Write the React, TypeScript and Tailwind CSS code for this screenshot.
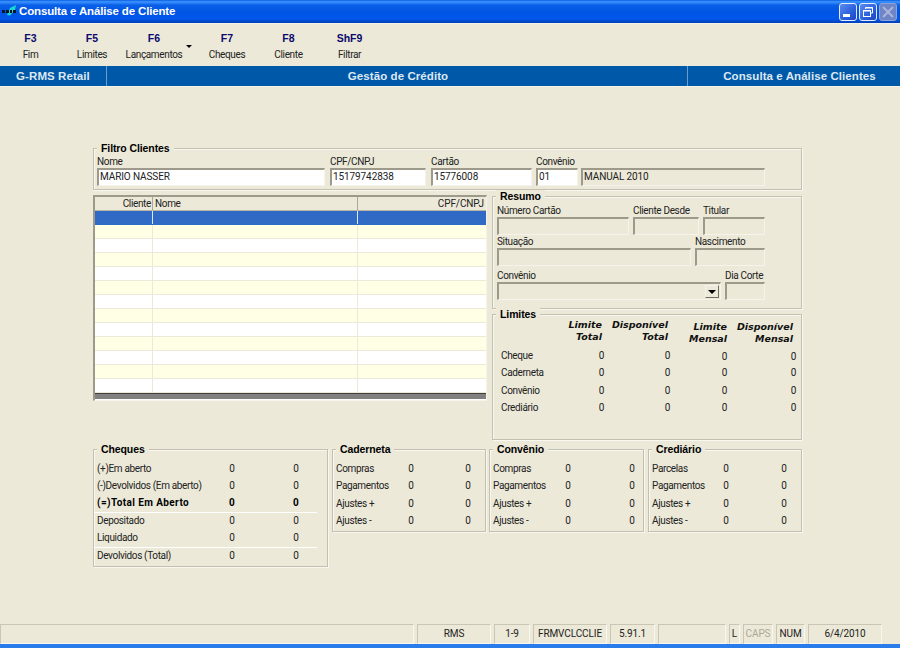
import React from 'react';

const sunken = 'border-t-2 border-l-2 border-r border-b border-t-[#9d9a8c] border-l-[#9d9a8c] border-r-[#f6f4ea] border-b-[#f6f4ea]';

const TOOLS = [
  { key: 'F3', label: 'Fim', width: 'w-[61px]' },
  { key: 'F5', label: 'Limites', width: 'w-[62px]' },
  { key: 'F6', label: 'Lançamentos', width: 'w-[62px]' },
  { key: 'F7', label: 'Cheques', width: 'w-[62px]' },
  { key: 'F8', label: 'Cliente', width: 'w-[61px]' },
  { key: 'ShF9', label: 'Filtrar', width: 'w-[61px]' },
];

function Group({ title, className, children }: { title: string; className: string; children?: React.ReactNode }) {
  return (
    <div className={`relative border border-[#c3c0b2] shadow-[inset_1px_1px_0_#f8f7f0,1px_1px_0_#f8f7f0] ${className}`}>
      <span className="absolute left-[3px] top-[-7px] bg-[#ece9d8] px-1 font-['Liberation_Sans',sans-serif] text-[10.5px] leading-[12px] font-bold tracking-[-0.1px] text-black">{title}</span>
      {children}
    </div>
  );
}

function Field({ label, className, value, white }: { label: string; className: string; value?: string; white?: boolean }) {
  return (
    <div className={className}>
      <div className="h-[12px] text-[10px] leading-[11px] text-[#222] whitespace-nowrap">{label}</div>
      <div className={`h-[18px] pl-px text-[10px] leading-[14px] tracking-[-0.1px] text-[#222] whitespace-nowrap ${sunken} ${white ? 'bg-white' : 'bg-[#ece9d8]'}`}>{value}</div>
    </div>
  );
}

function StatPanel({ title, className, cols, rows }: { title: string; className: string; cols: string; rows: { label: string; a: string; b: string }[] }) {
  return (
    <Group title={title} className={className}>
      <div className="pt-[10px]">
        {rows.map((r) => (
          <div key={r.label} className={`grid h-[17.5px] items-center text-[10px] leading-[12px] text-[#222] ${cols}`}>
            <span className="whitespace-nowrap pl-[3px]">{r.label}</span>
            <span className="text-center">{r.a}</span>
            <span className="col-start-4 text-center">{r.b}</span>
          </div>
        ))}
      </div>
    </Group>
  );
}

const shortRows = (first: string) => [
  { label: first, a: '0', b: '0' },
  { label: 'Pagamentos', a: '0', b: '0' },
  { label: 'Ajustes +', a: '0', b: '0' },
  { label: 'Ajustes -', a: '0', b: '0' },
];

const LIMIT_ROWS = ['Cheque', 'Caderneta', 'Convênio', 'Crediário'];

const STATUS = [
  { text: '', width: 'w-[414px]' },
  { text: 'RMS', width: 'w-[74px]' },
  { text: '1-9', width: 'w-[36px]' },
  { text: 'FRMVCLCCLIE', width: 'w-[74px]' },
  { text: '5.91.1', width: 'w-[45px]' },
  { text: '', width: 'w-[68px]' },
  { text: 'L', width: 'w-[11px]' },
  { text: 'CAPS', width: 'w-[30px]', dim: true },
  { text: 'NUM', width: 'w-[29px]' },
  { text: '6/4/2010', width: 'w-[74px]' },
];

export default function App() {
  return (
    <div className="flex h-[648px] w-[900px] flex-col overflow-hidden bg-[#ece9d8] font-['Roboto',sans-serif] tracking-[-0.35px]">
      {/* Title bar */}
      <div className="flex h-[23px] items-center bg-[linear-gradient(180deg,#0a5ee0_0%,#3d95ff_8%,#0a5fe8_22%,#0054e3_55%,#0058ee_80%,#0040b8_100%)] pl-[2px] pr-[3px] font-['Liberation_Sans',sans-serif]">
        <svg width="15" height="14" viewBox="0 0 15 14" className="mr-[2px] shrink-0">
          <path d="M5 10 L8 3 L14 0 L13 5 L8 10.5 Z" fill="#18d8d0" />
          <path d="M0 5h3v3H0zM4 5h3v3H4zM8 5h2v3H8zM11 5h3v3h-3z" fill="#0a1428" />
        </svg>
        <span className="text-[11.5px] font-bold tracking-[-0.15px] text-white">Consulta e Análise de Cliente</span>
        <div className="ml-auto flex gap-[2px]">
          <div className="flex h-[18px] w-[18px] items-end rounded-[3px] border border-[#e4ecfb] bg-[linear-gradient(135deg,#5d8cf0,#2a5fdc_60%,#1c45c0)] pb-[3px] pl-[3px]">
            <div className="h-[3px] w-[7px] bg-white" />
          </div>
          <div className="flex h-[18px] w-[18px] items-center justify-center rounded-[3px] border border-[#e4ecfb] bg-[linear-gradient(135deg,#5d8cf0,#2a5fdc_60%,#1c45c0)]">
            <svg width="12" height="12" viewBox="0 0 12 12" fill="none" stroke="white">
              <path d="M3.5 3V1.5H10.5V7H8.5" />
              <rect x="1.5" y="4.5" width="7" height="6" />
              <path d="M1.5 5H8.5M3.5 2H10.5" />
            </svg>
          </div>
          <div className="flex h-[18px] w-[18px] items-center justify-center rounded-[3px] border border-[#8ea3d8] bg-[#6f86c6]">
            <svg width="12" height="12" viewBox="0 0 12 12" fill="none" stroke="#a9b6dc" strokeWidth="2">
              <path d="M1 1L11 11M11 1L1 11" />
            </svg>
          </div>
        </div>
      </div>

      {/* Toolbar */}
      <div className="flex h-[43px] items-start border-t border-[#f4f2e8] pt-[7px]">
        {TOOLS.map((t) => (
          <React.Fragment key={t.key}>
            <div className={`${t.width} flex flex-col items-center`}>
              <span className="h-[14px] font-['Liberation_Sans',sans-serif] text-[10.5px] leading-[14px] font-bold tracking-normal text-[#0a0a6e]">{t.key}</span>
              <span className="mt-[4px] h-[12px] whitespace-nowrap text-[10px] leading-[12px] text-[#222]">{t.label}</span>
            </div>
            {t.key === 'F6' && (
              <div className="w-[11px] pt-[14px] pl-[1px]">
                <div className="h-0 w-0 border-x-[3px] border-t-[3px] border-x-transparent border-t-black" />
              </div>
            )}
          </React.Fragment>
        ))}
      </div>

      {/* Section bar */}
      <div className="flex h-[21px] border-b border-[#f6f4ea] bg-[#0058a8] font-['Liberation_Sans',sans-serif] text-[11.5px] leading-[20px] font-bold tracking-[0.08px] text-[#dfe8f2]">
        <div className="w-[107px] border-r border-[#6d9ccb] text-center">G-RMS Retail</div>
        <div className="w-[581px] border-r border-[#6d9ccb] pl-[2px] text-center">Gestão de Crédito</div>
        <div className="flex-1 pl-[11px] text-center">Consulta e Análise Clientes</div>
      </div>

      {/* Form */}
      <div className="flex-1 pl-[93px] pt-[61px]">
        <Group title="Filtro Clientes" className="flex h-[42px] w-[709px] pl-[3px] pt-[7px]">
          <Field label="Nome" className="w-[228px]" value="MARIO NASSER" white />
          <Field label="CPF/CNPJ" className="ml-[5px] w-[96px]" value="15179742838" white />
          <Field label="Cartão" className="ml-[5px] w-[101px]" value="15776008" white />
          <Field label="Convênio" className="ml-[4px] w-[42px]" value="01" white />
          <Field label="" className="ml-[3px] w-[184px]" value="MANUAL 2010" />
        </Group>

        <div className="mt-[5px] flex items-start">
          {/* Clients grid */}
          <div className={`h-[206px] w-[394px] overflow-hidden bg-white ${sunken}`}>
            <div className="grid h-[14px] grid-cols-[58px_205px_1fr] border-b border-[#b8b5a6] bg-[#ece9d8] text-[10px] leading-[13px] text-[#222]">
              <span className="border-r border-[#aca899] pr-px text-right">Cliente</span>
              <span className="border-r border-[#aca899] pl-[2px]">Nome</span>
              <span className="pr-[2px] text-right tracking-[-0.1px]">CPF/CNPJ</span>
            </div>
            {Array.from({ length: 13 }).map((_, i) => (
              <div
                key={i}
                className={`grid h-[14px] grid-cols-[58px_205px_1fr] border-b ${i === 0 ? 'border-[#316ac5] bg-[#316ac5]' : i % 2 === 1 ? 'border-[#ece9d8] bg-[#ffffe6]' : 'border-[#ece9d8] bg-white'}`}
              >
                <span className={`border-r ${i === 0 ? 'border-[#dfe6f5]' : 'border-[#ece9d8]'}`} />
                <span className={`border-r ${i === 0 ? 'border-[#dfe6f5]' : 'border-[#ece9d8]'}`} />
                <span />
              </div>
            ))}
            <div className="h-[6px] border-t border-[#404040] bg-[#808080]" />
          </div>

          <div className="ml-[5px] flex flex-col">
            <Group title="Resumo" className="mt-px h-[113px] w-[310px] pl-[4px] pt-[8px]">
              <div className="flex">
                <Field label="Número Cartão" className="w-[132px]" />
                <Field label="Cliente Desde" className="ml-[4px] w-[66px]" />
                <Field label="Titular" className="ml-[4px] w-[62px]" />
              </div>
              <div className="mt-[1px] flex">
                <Field label="Situação" className="w-[194px]" />
                <Field label="Nascimento" className="ml-[4px] w-[70px]" />
              </div>
              <div className="mt-[4px] flex">
                <div className="w-[224px]">
                  <div className="h-[12px] text-[10px] leading-[11px] text-[#222]">Convênio</div>
                  <div className={`flex h-[18px] justify-end ${sunken}`}>
                    <div className="mr-[1px] mt-[1px] flex h-[13px] w-[14px] items-center justify-center border border-[#f6f4ea] border-r-[#716f64] border-b-[#716f64] bg-[#ece9d8]">
                      <div className="h-0 w-0 border-x-[4px] border-t-[4px] border-x-transparent border-t-black" />
                    </div>
                  </div>
                </div>
                <Field label="Dia Corte" className="ml-[4px] w-[40px]" />
              </div>
            </Group>

            <Group title="Limites" className="mt-[5px] h-[126px] w-[310px] pl-[8px]">
              <div className="grid grid-cols-[60px_43px_66px_57px_69px] pt-[4px] text-right font-['DejaVu_Sans',sans-serif] text-[9.5px] leading-[12px] font-bold italic tracking-normal text-[#111]">
                <span />
                <span className="whitespace-nowrap pr-[2px]">Limite<br />Total</span>
                <span className="whitespace-nowrap pr-[2px]">Disponível<br />Total</span>
                <span className="mt-[2px] whitespace-nowrap">Limite<br />Mensal</span>
                <span className="mt-[2px] whitespace-nowrap pr-[3px]">Disponível<br />Mensal</span>
              </div>
              <div className="mt-[2px]">
                {LIMIT_ROWS.map((r, i) => (
                  <div key={r} className="grid h-[17.5px] grid-cols-[60px_43px_66px_57px_69px] items-center text-[10px] leading-[12px] text-[#222]">
                    <span>{r}</span>
                    <span className="text-right">0</span>
                    <span className="text-right">0</span>
                    <span className={`text-right ${i === 0 ? 'mt-[2px]' : ''}`}>0</span>
                    <span className={`text-right ${i === 0 ? 'mt-[2px]' : ''}`}>0</span>
                  </div>
                ))}
              </div>
            </Group>
          </div>
        </div>

        {/* Totals */}
        <div className="mt-[9px] flex items-start">
          <Group title="Cheques" className="h-[118px] w-[235px]">
            <div className="pt-[10px]">
              {[
                { label: '(+)Em aberto' },
                { label: '(-)Devolvidos (Em aberto)' },
                { label: '(=)Total Em Aberto', bold: true, line: true },
                { label: 'Depositado' },
                { label: 'Liquidado', line: true },
                { label: 'Devolvidos (Total)' },
              ].map((r) => (
                <div
                  key={r.label}
                  className={`mr-[10px] grid h-[17.5px] grid-cols-[128px_20px_44px_20px] items-center text-[10px] leading-[12px] ${r.bold ? 'font-bold tracking-[0.4px] text-black' : 'text-[#222]'} ${r.line ? 'border-b border-white' : ''}`}
                >
                  <span className="whitespace-nowrap pl-[3px]">{r.label}</span>
                  <span className="text-center">0</span>
                  <span className="col-start-4 text-center">0</span>
                </div>
              ))}
            </div>
          </Group>
          <StatPanel title="Caderneta" className="ml-[4px] h-[83px] w-[154px]" cols="grid-cols-[68px_20px_37px_20px]" rows={shortRows('Compras')} />
          <StatPanel title="Convênio" className="ml-[3px] h-[83px] w-[155px]" cols="grid-cols-[68px_20px_44px_20px]" rows={shortRows('Compras')} />
          <StatPanel title="Crediário" className="ml-[4px] h-[83px] w-[154px]" cols="grid-cols-[67px_20px_38px_20px]" rows={shortRows('Parcelas')} />
        </div>
      </div>

      {/* Status bar */}
      <div className="flex h-[20px] gap-[3px] bg-[#ece9d8] text-[10px] leading-[18px] tracking-[-0.1px] text-[#222]">
        {STATUS.map((s, i) => (
          <div
            key={i}
            className={`${s.width} shrink-0 border border-t-[#c9c6b6] border-l-[#c9c6b6] border-r-[#f8f7f0] border-b-[#f8f7f0] text-center whitespace-nowrap ${s.dim ? 'text-[#aca899]' : ''}`}
          >
            {s.text}
          </div>
        ))}
      </div>
      <div className="h-[4px] bg-[#2a7cea]" />
    </div>
  );
}
